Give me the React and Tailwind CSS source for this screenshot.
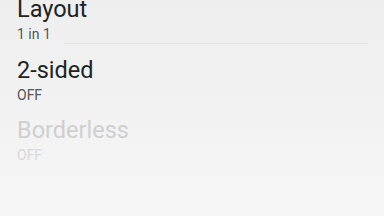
export default function App() {
    const rows = [
        { title: 'Layout', sub: '1 in 1', divider: true },
        { title: '2-sided', sub: 'OFF' },
        { title: 'Borderless', sub: 'OFF', disabled: true },
    ];

    return (
        <div className="w-[384px] h-[216px] overflow-hidden bg-gradient-to-b from-[#eeeeee] to-[#f6f6f6] font-['Roboto',sans-serif]">
            <div className="-mt-[5px] pl-[17px]">
                {rows.map((r, i) => (
                    <div key={i} className="pb-[11.5px]">
                        <div className={`text-[23.5px] leading-[28px] ${r.disabled ? 'text-[#cfcfcf]' : 'text-[#222222]'}`}>{r.title}</div>
                        <div className={`mt-[2px] text-[14px] leading-[18px] ${r.disabled ? 'text-[#d8d8d8]' : 'text-[#555555]'}`}>{r.sub}</div>
                        <div className={`h-px ml-[47px] w-[304px] ${r.divider ? 'bg-[#e0e0e0]' : 'bg-transparent'}`} />
                    </div>
                ))}
            </div>
        </div>
    );
}
